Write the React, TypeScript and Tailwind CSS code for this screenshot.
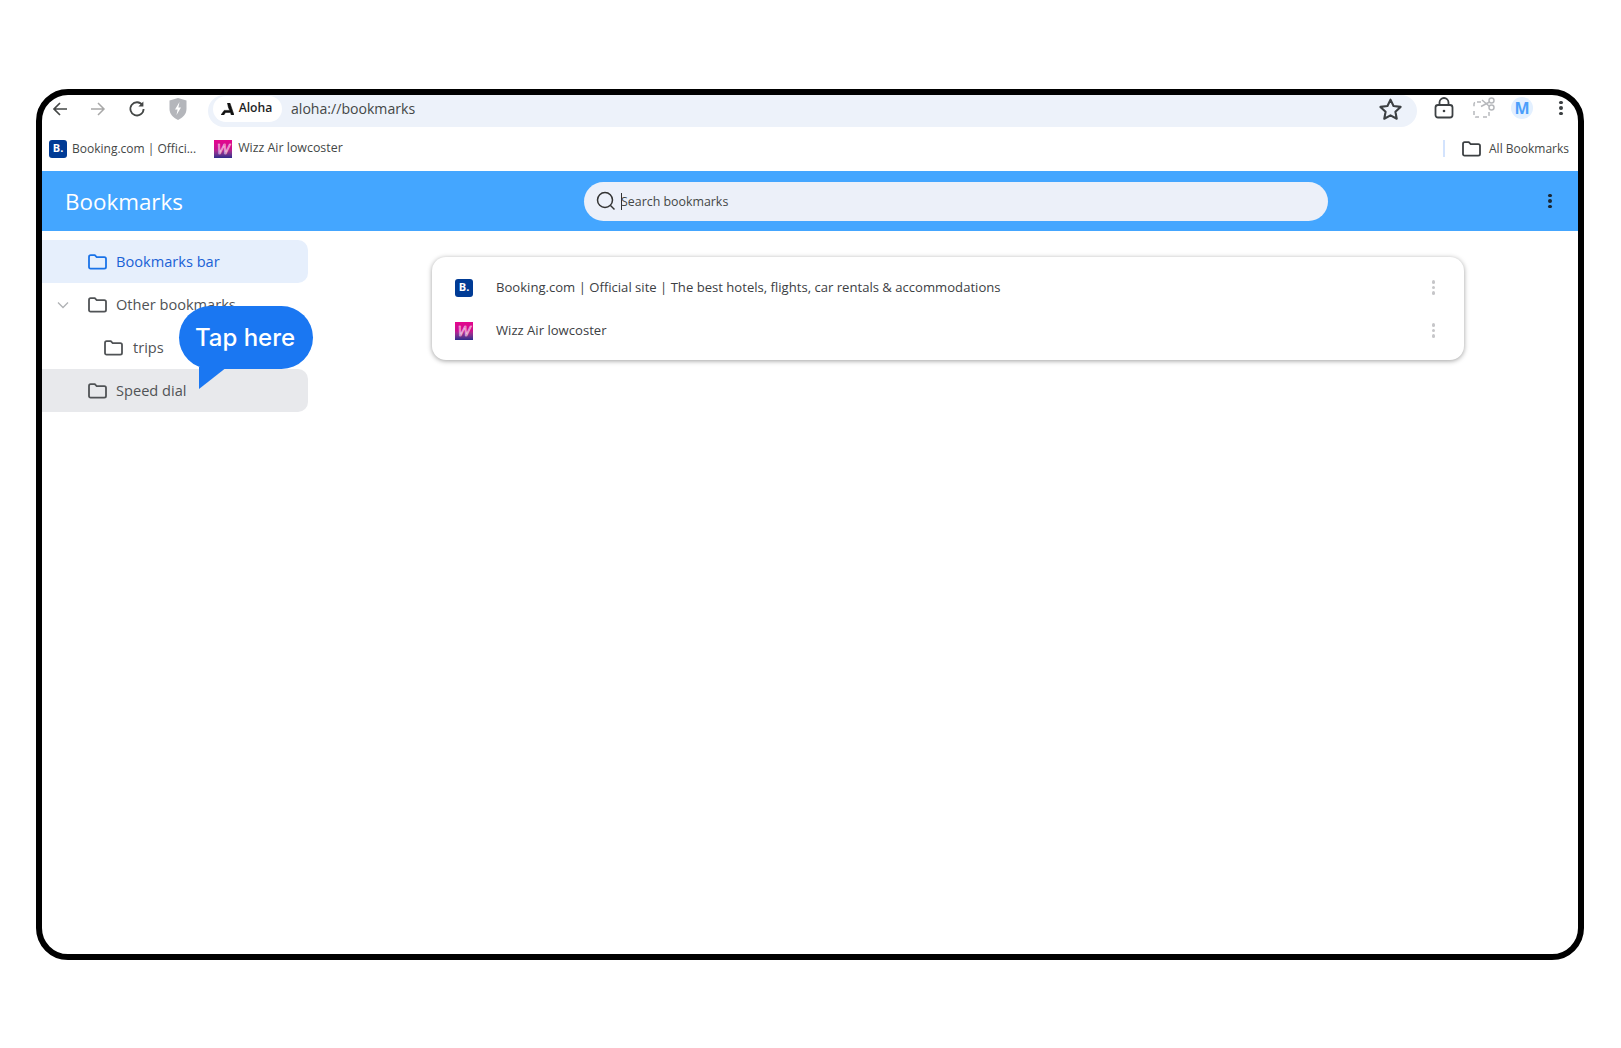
import { ReactNode } from 'react'

const font = { fontFamily: '"Open Sans", "Noto Sans", sans-serif' }

function FolderIcon({ className = 'text-[#505356]' }: { className?: string }) {
  return (
    <svg width="19" height="16" viewBox="0 0 19 16" fill="none" stroke="currentColor" strokeWidth="1.8" className={className}>
      <path d="M1 3c0-1 .6-1.800 1.600-1.800h4.200l1.900 2h7.600c1 0 1.700.7 1.700 1.600v8.200c0 .9-.7 1.600-1.700 1.600H2.600C1.600 14.600 1 13.900 1 13V3z" />
    </svg>
  )
}

function Dots({ className }: { className: string }) {
  return (
    <div className={`flex flex-col gap-[2px] ${className}`}>
      <span className="h-[3.5px] w-[3.5px] rounded-full bg-current" />
      <span className="h-[3.5px] w-[3.5px] rounded-full bg-current" />
      <span className="h-[3.5px] w-[3.5px] rounded-full bg-current" />
    </div>
  )
}

function BookingLogo() {
  return (
    <div className="flex h-[18px] w-[18px] shrink-0 items-center justify-center rounded-[3px] bg-[#003b95] text-[11px] font-bold text-white">
      B.
    </div>
  )
}

function WizzLogo() {
  return (
    <div className="flex h-[18px] w-[18px] shrink-0 items-center justify-center bg-gradient-to-b from-[#e5068d] via-[#c80f8f] to-[#2d2a8c] text-[15px] italic leading-none text-transparent [-webkit-text-stroke:0.6px_#fbd3ea]">
      W
    </div>
  )
}

function SideRow({ children, className = '' }: { children: ReactNode; className?: string }) {
  return <div className={`flex h-[43px] w-[266px] items-center rounded-r-[10px] text-[14.6px] font-medium ${className}`}>{children}</div>
}

function BookmarkRow({ logo, title }: { logo: ReactNode; title: string }) {
  return (
    <div className="flex h-[43px] items-center pl-[23px] pr-[29px] text-[13.1px] text-[#3c4043]">
      {logo}
      <span className="ml-[23px] mt-[1px] flex-1">{title}</span>
      <Dots className="text-[#c6c6c9]" />
    </div>
  )
}

export default function App() {
  return (
    <div className="h-[1048px] w-[1621px] bg-white pl-[36px] pt-[89px]" style={font}>
      <div className="relative h-[871px] w-[1548px] overflow-hidden rounded-[32px] border-[6px] border-black bg-white">
        {/* Toolbar */}
        <div className="flex h-[33px] items-start text-[#444746]">
          <div className="ml-[9px] mt-[3px] flex items-center">
            <svg width="18" height="18" viewBox="0 0 18 18" fill="none" stroke="currentColor" strokeWidth="1.7">
              <path d="M16 9H3M9 3 3 9l6 6" />
            </svg>
            <svg width="18" height="18" viewBox="0 0 18 18" fill="none" stroke="#a8a8a8" strokeWidth="1.5" className="ml-[20px]">
              <path d="M2 9h13M9 3l6 6-6 6" />
            </svg>
            <svg width="18" height="18" viewBox="0 0 18 18" fill="none" stroke="currentColor" strokeWidth="1.8" className="ml-[21px]">
              <path d="M14.500 5.200A6.600 6.600 0 1 0 15.600 9" />
              <path d="M15.400 1.600v5h-5z" fill="currentColor" stroke="none" />
            </svg>
            <svg width="18" height="22" viewBox="0 0 18 22" className="ml-[23px]">
              <path d="M9 0 17.500 2.500V11c0 5-3.600 8.800-8.500 11C4.100 19.800.5 16 .5 11V2.500z" fill="#b4b6bb" />
              <path d="M10.500 4 6 11.500h2.600L7.500 17l4.500-7.500H9.400z" fill="#fff" />
            </svg>
          </div>
          <div className="ml-[21px] flex h-[32px] w-[1209px] shrink-0 items-center rounded-full bg-[#edf2fa] pl-[5px] pr-[14px]">
            <div className="flex h-[26px] w-[69px] shrink-0 items-center justify-center rounded-full bg-white -mt-[5px] pr-[2px]">
              <svg width="13" height="12" viewBox="0 0 13 12" fill="#111" stroke="#111" strokeWidth="0.6" className="mr-[5px]">
                <path d="M6.500 0h2.400L13 12h-2.700l-.8-2.600H4.600L2.700 12H0l3.200-4.600h5.500L7.300 4z" />
              </svg>
              <span className="text-[12.2px] font-semibold text-[#1f1f1f]">Aloha</span>
            </div>
            <span className="ml-[9px] -mt-[5px] flex-1 text-[14.1px] text-[#444746]">aloha://bookmarks</span>
            <svg width="25" height="25" viewBox="0 0 24 24" fill="none" stroke="#3c4043" strokeWidth="2" strokeLinejoin="round" className="-mt-[4px]">
              <path d="M12 2.500l2.900 6.200 6.800.8-5 4.700 1.300 6.700-6-3.300-6 3.300 1.300-6.700-5-4.700 6.800-.8z" />
            </svg>
          </div>
          <div className="ml-[17px] mt-[2px] flex items-center">
            <svg width="20" height="22" viewBox="0 0 20 22" fill="none" stroke="#3c4043" strokeWidth="1.8">
              <rect x="1.500" y="8" width="17" height="12.500" rx="2.500" />
              <path d="M5.500 8V5.500a4.500 4.500 0 0 1 9 0V8" />
              <circle cx="10" cy="14" r="1.300" fill="#3c4043" stroke="none" />
            </svg>
            <svg width="22" height="22" viewBox="0 0 22 22" fill="none" stroke="#b6b8bc" strokeWidth="1.500" className="ml-[19px]">
              <path d="M8 5H3a2 2 0 0 0-2 2v3M1 14v4a2 2 0 0 0 2 2h3M10 20h4a2 2 0 0 0 2-2v-3" strokeDasharray="4 2" />
              <circle cx="18.500" cy="3.500" r="2.500" />
              <circle cx="18.500" cy="10.500" r="2.500" />
              <path d="M16.500 5 8 9.500M16.300 9.300 9 3" />
            </svg>
            <div className="ml-[16px] flex h-[22px] w-[22px] items-center justify-center rounded-full bg-[#e3f0ff] text-[16px] font-bold text-[#4b9ffb]">M</div>
            <Dots className="ml-[26px] text-[#3c4043]" />
          </div>
        </div>

        {/* Bookmarks bar */}
        <div className="flex h-[43px] items-center pb-[2px] pl-[7px] pr-[9px] text-[12px] text-[#444746]">
          <BookingLogo />
          <span className="ml-[5px]">Booking.com | Offici...</span>
          <div className="ml-[18px]"><WizzLogo /></div>
          <span className="ml-[6px] text-[12.4px]">Wizz Air lowcoster</span>
          <div className="ml-auto h-[17px] w-[2px] bg-[#d3e3fd]" />
          <FolderIcon className="ml-[17px] text-[#3c4043]" />
          <span className="ml-[8px]">All Bookmarks</span>
        </div>

        {/* Header */}
        <div className="flex h-[60px] items-center bg-[#44a6ff] pl-[23px]">
          <span className="mt-[2px] w-[519px] text-[22.4px] text-white">Bookmarks</span>
          <div className="flex h-[39px] w-[744px] items-center rounded-full bg-[#ecf0f9] pl-[12px] text-[12.4px] font-medium text-[#444746]">
            <svg width="20" height="20" viewBox="0 0 20 20" fill="none" stroke="#333" strokeWidth="1.500">
              <circle cx="9" cy="9" r="7.500" />
              <path d="M14.500 14.500 18.500 18.500" />
            </svg>
            <span className="ml-[5px] h-[17px] w-px bg-[#333]" />
            <span className="-ml-px mt-[2px]">Search bookmarks</span>
          </div>
          <Dots className="ml-[220px] text-[#1b2733]" />
        </div>

        {/* Body */}
        <div className="flex pt-[9px]">
          <div className="flex w-[390px] flex-col text-[#505356]">
            <SideRow className="bg-[#e6effc] text-[#1a62d6]">
              <span className="ml-[46px]"><FolderIcon className="text-[#1a73e8]" /></span>
              <span className="ml-[9px]">Bookmarks bar</span>
            </SideRow>
            <SideRow>
              <svg width="12" height="8" viewBox="0 0 12 8" fill="none" stroke="#b0b2b5" strokeWidth="1.300" className="ml-[15px]">
                <path d="M1 1.500 6 6.500l5-5" />
              </svg>
              <span className="ml-[19px]"><FolderIcon /></span>
              <span className="ml-[9px]">Other bookmarks</span>
            </SideRow>
            <SideRow>
              <span className="ml-[62px]"><FolderIcon /></span>
              <span className="ml-[10px]">trips</span>
            </SideRow>
            <SideRow className="bg-[#e8e9ec]">
              <span className="ml-[46px]"><FolderIcon /></span>
              <span className="ml-[9px]">Speed dial</span>
            </SideRow>
          </div>
          <div className="mt-[17px] h-[103px] w-[1032px] rounded-[14px] bg-white pt-[9px] shadow-[0_1px_5px_rgba(0,0,0,0.38)]">
            <BookmarkRow logo={<BookingLogo />} title="Booking.com | Official site | The best hotels, flights, car rentals & accommodations" />
            <BookmarkRow logo={<WizzLogo />} title="Wizz Air lowcoster" />
          </div>
        </div>

        {/* Tap here bubble */}
        <div className="absolute left-[137px] top-[211px] flex h-[63px] w-[134px] items-center justify-center rounded-full bg-[#1a77f2] pr-[2px] text-[24px] font-medium text-white" style={{ fontFamily: 'Inter, sans-serif' }}>
          Tap here
          <svg width="28" height="22" viewBox="0 0 28 22" fill="#1a77f2" className="absolute left-[20px] top-[61px]">
            <path d="M0 0h28L0 22z" />
          </svg>
        </div>
      </div>
    </div>
  )
}
